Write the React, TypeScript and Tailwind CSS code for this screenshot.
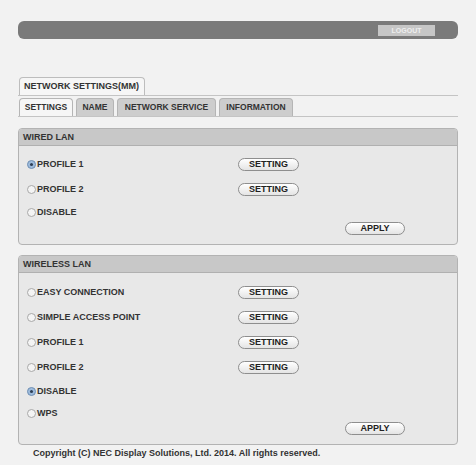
import React from 'react';

const FONT = { fontFamily: '"Liberation Sans", Arial, sans-serif' };

function Radio({ checked }: { checked?: boolean }) {
  return checked ? (
    <span className="w-[9px] h-[9px] rounded-full border border-[#6f8fb3] bg-[#9dbbdc] flex items-center justify-center shrink-0">
      <span className="w-[3px] h-[3px] rounded-full bg-[#2c3e55]" />
    </span>
  ) : (
    <span className="w-[9px] h-[9px] rounded-full border border-[#a8a8a8] bg-[#f4f4f4] shrink-0" />
  );
}

function PillButton({ label, width }: { label: string; width: string }) {
  return (
    <button
      className={`${width} h-[13px] rounded-full border border-[#8e8e8e] bg-gradient-to-b from-[#ffffff] to-[#e4e4e4] text-[9px] font-bold text-[#222] leading-none flex items-center justify-center`}
    >
      {label}
    </button>
  );
}

function Row({ label, checked, setting, mt }: { label: string; checked?: boolean; setting?: boolean; mt: string }) {
  return (
    <div className={`flex items-center h-[14px] ${mt}`}>
      <div className="w-[211px] flex items-center gap-[1px]">
        <Radio checked={checked} />
        <span className="text-[9px] font-bold text-[#333] leading-none">{label}</span>
      </div>
      {setting && <PillButton label="SETTING" width="w-[61px]" />}
    </div>
  );
}

function Panel({ title, children }: { title: string; children: React.ReactNode }) {
  return (
    <div className="border border-[#b3b3b3] rounded-[4px] bg-[#e8e8e8] overflow-hidden">
      <div className="h-[17px] bg-[#c8c8c8] border-b border-[#b0b0b0] flex items-center pl-[4px]">
        <span className="text-[9px] font-bold text-[#333] leading-none">{title}</span>
      </div>
      <div className="pl-[8px]">{children}</div>
    </div>
  );
}

const TABS = [
  { label: 'SETTINGS', w: 'w-[54px]', active: true },
  { label: 'NAME', w: 'w-[38px]' },
  { label: 'NETWORK SERVICE', w: 'w-[99px]' },
  { label: 'INFORMATION', w: 'w-[74px]' },
];

export default function App() {
  return (
    <div className="w-[476px] h-[465px] bg-[#f2f2f2] pt-[21px] px-[18px]" style={FONT}>
      {/* Top bar */}
      <div className="h-[18px] rounded-[6px] bg-[#7a7a7a] flex items-center justify-end pr-[23px]">
        <div className="w-[57px] h-[11px] bg-[#c6c6c6] text-[7px] font-bold text-[#eee] leading-none flex items-center justify-center">
          LOGOUT
        </div>
      </div>

      {/* Tab row 1 */}
      <div className="mt-[38px] border-b border-[#c4c4c4] flex pl-[1px]">
        <div className="w-[126px] h-[18px] border border-b-0 border-[#bdbdbd] rounded-t-[4px] bg-[#f6f6f6] flex items-center pl-[4px]">
          <span className="text-[9px] font-bold text-[#333] leading-none">NETWORK SETTINGS(MM)</span>
        </div>
      </div>

      {/* Tab row 2 */}
      <div className="mt-[2px] border-b border-[#c4c4c4] flex gap-[3px] pl-[1px]">
        {TABS.map((t) => (
          <div
            key={t.label}
            className={`${t.w} h-[18px] border border-b-0 border-[#b5b5b5] rounded-t-[4px] flex items-center justify-center ${
              t.active ? 'bg-[#f6f6f6]' : 'bg-[#cdcdcd]'
            }`}
          >
            <span className="text-[8.5px] font-bold text-[#333] leading-none whitespace-nowrap">{t.label}</span>
          </div>
        ))}
      </div>

      {/* Wired LAN */}
      <div className="mt-[11px]">
        <Panel title="WIRED LAN">
          <Row label="PROFILE 1" checked setting mt="mt-[11px]" />
          <Row label="PROFILE 2" setting mt="mt-[11px]" />
          <Row label="DISABLE" mt="mt-[9px]" />
          <div className="flex justify-end pr-[52px] mt-[3px] pb-[9px]">
            <PillButton label="APPLY" width="w-[60px]" />
          </div>
        </Panel>
      </div>

      {/* Wireless LAN */}
      <div className="mt-[10px]">
        <Panel title="WIRELESS LAN">
          <Row label="EASY CONNECTION" setting mt="mt-[12px]" />
          <Row label="SIMPLE ACCESS POINT" setting mt="mt-[11px]" />
          <Row label="PROFILE 1" setting mt="mt-[11px]" />
          <Row label="PROFILE 2" setting mt="mt-[11px]" />
          <Row label="DISABLE" checked mt="mt-[10px]" />
          <Row label="WPS" mt="mt-[8px]" />
          <div className="flex justify-end pr-[52px] mt-[2px] pb-[9px]">
            <PillButton label="APPLY" width="w-[60px]" />
          </div>
        </Panel>
      </div>

      <div className="pl-[15px] mt-[4px] text-[9px] font-bold text-[#333] leading-none">
        Copyright (C) NEC Display Solutions, Ltd. 2014. All rights reserved.
      </div>
    </div>
  );
}
